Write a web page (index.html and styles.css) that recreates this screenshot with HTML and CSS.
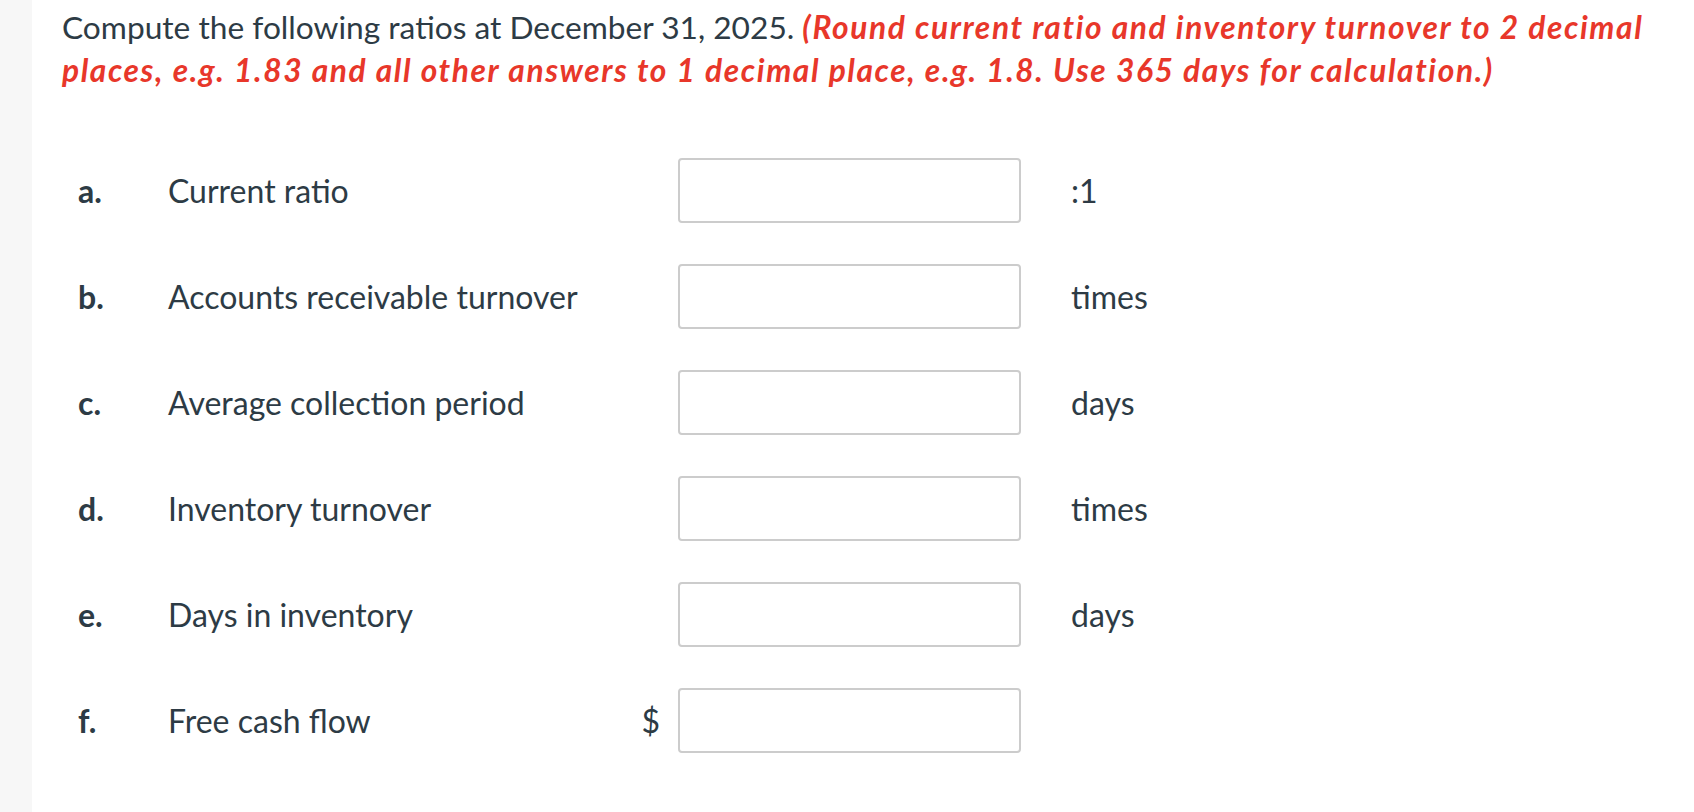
FILE: index.html
```html
<!DOCTYPE html>
<html lang="en">
<head>
<meta charset="utf-8">
<title>Ratios</title>
<link rel="stylesheet" href="styles.css">
</head>
<body>
<div class="page">
  <div class="stripe"></div>
  <main class="content">
    <p class="prompt">Compute the following ratios at December 31, 2025. <em class="hint">(Round current ratio and inventory turnover to 2 decimal places, e.g. 1.83 and all other answers to 1 decimal place, e.g. 1.8. Use 365 days for calculation.)</em></p>
    <div class="rows">
      <div class="row">
        <span class="letter">a.</span>
        <span class="label">Current ratio</span>
        <span class="pre"></span>
        <input class="answer" type="text">
        <span class="unit">:1</span>
      </div>
      <div class="row">
        <span class="letter">b.</span>
        <span class="label">Accounts receivable turnover</span>
        <span class="pre"></span>
        <input class="answer" type="text">
        <span class="unit">times</span>
      </div>
      <div class="row">
        <span class="letter">c.</span>
        <span class="label">Average collection period</span>
        <span class="pre"></span>
        <input class="answer" type="text">
        <span class="unit">days</span>
      </div>
      <div class="row">
        <span class="letter">d.</span>
        <span class="label">Inventory turnover</span>
        <span class="pre"></span>
        <input class="answer" type="text">
        <span class="unit">times</span>
      </div>
      <div class="row">
        <span class="letter">e.</span>
        <span class="label">Days in inventory</span>
        <span class="pre"></span>
        <input class="answer" type="text">
        <span class="unit">days</span>
      </div>
      <div class="row">
        <span class="letter">f.</span>
        <span class="label">Free cash flow</span>
        <span class="pre">$</span>
        <input class="answer" type="text">
        <span class="unit"></span>
      </div>
    </div>
  </main>
</div>
</body>
</html>
```
FILE: styles.css
```css
html, body {
  margin: 0;
  padding: 0;
  background: #ffffff;
}

body {
  font-family: Lato, "Noto Sans", sans-serif;
  color: #2d3b45;
}

.page {
  display: flex;
  min-height: 812px;
}

.stripe {
  width: 32px;
  flex: none;
  background: #f7f7f7;
}

.content {
  flex: 1;
  padding: 6px 30px 0 30px;
}

.prompt {
  margin: 0;
  font-size: 31.7px;
  line-height: 43px;
}

.hint {
  color: #e8372a;
  font-style: italic;
  font-weight: 700;
  letter-spacing: 1.6px;
}

.rows {
  display: flex;
  flex-direction: column;
  gap: 41px;
  margin-top: 66px;
  padding-left: 16px;
}

.row {
  display: grid;
  grid-template-columns: 90px 470px 40px 343px auto;
  align-items: center;
  font-size: 32px;
  height: 65px;
}

.letter {
  font-weight: 700;
}

.pre {
  text-align: right;
  padding-right: 18px;
}

.answer {
  box-sizing: border-box;
  width: 343px;
  height: 65px;
  margin: 0;
  border: 2px solid #cccccc;
  border-radius: 4px;
  background: #ffffff;
  font: inherit;
}

.unit {
  padding-left: 50px;
}
```
